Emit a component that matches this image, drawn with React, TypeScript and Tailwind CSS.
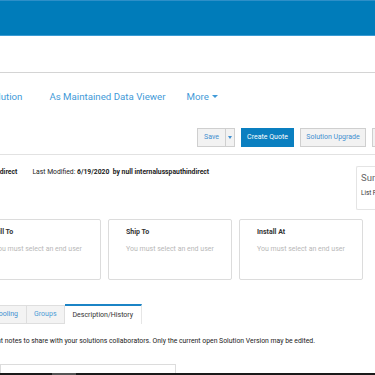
const font = { fontFamily: "Roboto, 'Liberation Sans', sans-serif" }

function AddressCard({ title, className = "" }: { title: string; className?: string }) {
  return (
    <div className={`h-[61px] shrink-0 rounded-[2px] border border-[#dcdcdc] bg-white px-[17px] pt-[8px] ${className}`}>
      <p className="text-[7px] font-bold leading-[9px] text-[#333]">{title}</p>
      <p className="mt-[8px] text-[7px] leading-[9px] text-[#b8b8b8]">You must select an end user</p>
    </div>
  )
}

export default function App() {
  return (
    <div className="h-[375px] w-[375px] overflow-hidden bg-white" style={font}>
      <div className="h-[36px] border-t border-[#2d8fc8] border-b border-b-[#3a9bd3] bg-[#007cba]" />
      <div className="h-[37px] border-b border-[#d4d4d4]" />

      <nav className="flex h-[48px] items-center text-[9.7px] text-[#3f9ad8]">
        <span className="-ml-[13px]">Solution</span>
        <span className="ml-[27px]">As Maintained Data Viewer</span>
        <span className="ml-[21px] flex items-center gap-[3px]">
          More
          <span className="h-0 w-0 border-x-[3px] border-t-[3px] border-x-transparent border-t-[#3f9ad8]" />
        </span>
      </nav>

      <div className="flex h-[34px] items-start justify-end gap-[6px] border-b border-[#e2e2e2] pt-[7px] text-[7px]">
        <div className="flex h-[19px] border border-[#cfcfcf] bg-[#f2f2f2] text-[#3f8fd0]">
          <span className="flex items-center px-[6px]">Save</span>
          <span className="flex w-[9px] items-center justify-center border-l border-[#cfcfcf]">
            <span className="h-0 w-0 border-x-[2.5px] border-t-[3px] border-x-transparent border-t-[#3f8fd0]" />
          </span>
        </div>
        <div className="flex h-[19px] w-[53px] items-center justify-center bg-[#0a7fc0] text-white">Create Quote</div>
        <div className="flex h-[19px] w-[66px] items-center justify-center border border-[#cfcfcf] bg-[#f2f2f2] text-[#3f8fd0]">
          Solution Upgrade
        </div>
        <div className="-mr-[4px] h-[19px] w-[7px] border border-[#cfcfcf] bg-[#f2f2f2]" />
      </div>

      <div className="flex h-[64px] items-start justify-between">
        <p className="mt-[13px] flex whitespace-nowrap text-[6.8px] leading-[9px] text-[#222]">
          <span className="-ml-[6px] font-bold">Indirect</span>
          <span className="ml-[15px]">Last Modified:&nbsp;</span>
          <span className="font-bold">6/19/2020&nbsp; by null internalusspauthindirect</span>
        </p>
        <div className="-mr-[21px] mt-[11px] h-[44px] w-[40px] shrink-0 rounded-l-[2px] border border-r-0 border-[#e4e4e4] pl-[4px] pt-[5px]">
          <p className="whitespace-nowrap text-[9.5px] leading-[12px] text-[#666]">Summary</p>
          <p className="mt-[5px] whitespace-nowrap text-[6.3px] leading-[9px] text-[#333]">List Price</p>
        </div>
      </div>

      <div className="flex gap-[7px]">
        <AddressCard title="Bill To" className="-ml-[24px] w-[125px]" />
        <AddressCard title="Ship To" className="w-[124px]" />
        <AddressCard title="Install At" className="w-[124px]" />
      </div>

      <div className="mt-[24px] flex h-[20px] items-end text-[7px]">
        <div className="-ml-[14px] flex h-[19px] items-center border border-[#dedede] bg-[#f3f3f3] px-[8px] text-[#3f8fd0]">Tooling</div>
        <div className="flex h-[19px] items-center border border-l-0 border-[#dedede] bg-[#f3f3f3] px-[7px] text-[#4a9bd6]">Groups</div>
        <div className="flex h-[20px] items-center border-t-2 border-r border-t-[#1b84c6] border-r-[#e6e6e6] bg-white px-[8px] text-[#333]">
          Description/History
        </div>
      </div>

      <p className="mt-[13px] whitespace-nowrap text-[6.85px] leading-[9px] text-[#222]">
        <span className="-ml-[40px] inline-block">Add comment notes to share with your solutions collaborators. Only the current open Solution Version may be edited.</span>
      </p>

      <div className="mt-[18px] h-[9px] w-[176px] border border-b-0 border-[#dcdcdc]" />
      <div className="flex h-[3px] bg-[#1a1a1a]">
        <div className="ml-[52px] w-[24px] bg-[#555]" />
      </div>
    </div>
  )
}
